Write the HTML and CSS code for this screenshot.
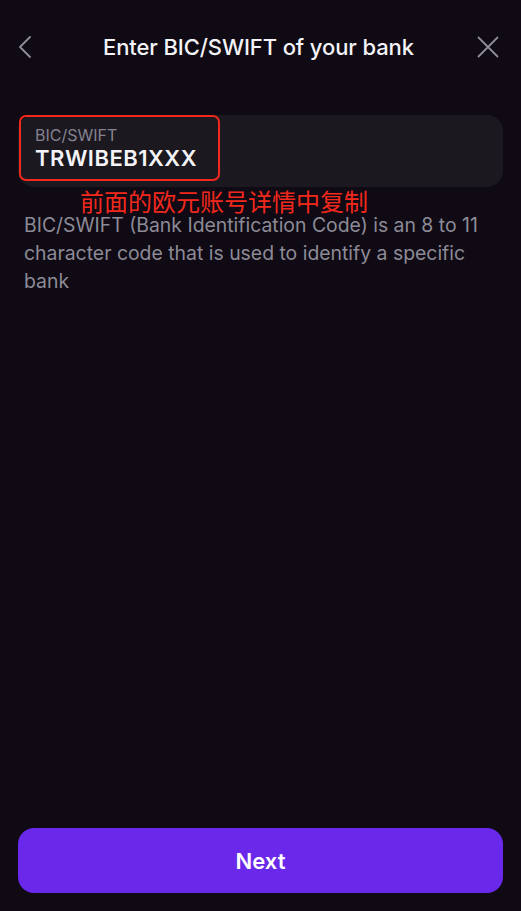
FILE: index.html
```html
<!DOCTYPE html>
<html lang="en">
<head>
<meta charset="utf-8">
<link rel="stylesheet" href="styles.css">
</head>
<body>
<div class="screen">
  <header class="topbar">
    <button class="icon-btn" aria-label="Back">
      <svg width="14" height="22" viewBox="0 0 14 22"><path d="M12 1 L2 11 L12 21" fill="none" stroke="#8f8c99" stroke-width="1.8" stroke-linecap="round" stroke-linejoin="round"/></svg>
    </button>
    <h1 class="title">Enter BIC/SWIFT of your bank</h1>
    <button class="icon-btn" aria-label="Close">
      <svg width="22" height="22" viewBox="0 0 22 22"><path d="M1.5 1.5 L20.5 20.5 M20.5 1.5 L1.5 20.5" fill="none" stroke="#8f8c99" stroke-width="1.8" stroke-linecap="round"/></svg>
    </button>
  </header>

  <main class="content">
    <div class="field-wrap">
      <div class="field">
        <div class="field-label">BIC/SWIFT</div>
        <div class="field-value">TRWIBEB1XXX</div>
      </div>
      <div class="highlight"></div>
      <div class="note">前面的欧元账号详情中复制</div>
    </div>
    <p class="desc">BIC/SWIFT (Bank Identification Code) is an 8 to 11 character code that is used to identify a specific bank</p>
  </main>

  <footer class="footer">
    <button class="primary">Next</button>
  </footer>
</div>
</body>
</html>
```

FILE: styles.css
```css
* { box-sizing: border-box; }
html, body {
  margin: 0;
  padding: 0;
  background: #0f0a14;
  height: 100%;
}
body {
  font-family: Inter, "Noto Sans", sans-serif;
  color: #f2f1f5;
}
.screen {
  height: 911px;
  display: flex;
  flex-direction: column;
}
.topbar {
  display: flex;
  align-items: center;
  justify-content: space-between;
  padding: 36px 22px 0 18px;
  height: 58px;
}
.icon-btn {
  background: none;
  border: 0;
  padding: 0;
  width: 22px;
  height: 22px;
  display: flex;
  align-items: center;
  justify-content: flex-start;
}
.title {
  margin: 0;
  font-size: 22px;
  font-weight: 500;
  color: #f4f3f7;
  letter-spacing: -0.1px;
}
.content {
  flex: 1;
  padding: 57px 18px 0;
}
.field-wrap {
  position: relative;
}
.field {
  background: #1b1820;
  border-radius: 16px;
  height: 72px;
  padding: 10px 17px 0;
}
.field-label {
  font-size: 16px;
  color: #858290;
  line-height: 20px;
}
.field-value {
  font-size: 22px;
  font-weight: 600;
  color: #f4f3f7;
  line-height: 26px;
  letter-spacing: 0.5px;
}
.highlight {
  position: absolute;
  left: 1px;
  top: 0;
  width: 201px;
  height: 66px;
  border: 2px solid #f2281c;
  border-radius: 7px;
}
.note {
  position: absolute;
  left: 62px;
  top: 76px;
  font-family: "Noto Sans CJK SC", sans-serif;
  font-size: 24px;
  line-height: 20px;
  color: #f2281c;
  white-space: nowrap;
}
.desc {
  margin: 24px 0 0 6px;
  font-size: 19.4px;
  line-height: 28px;
  color: #8d8a97;
  max-width: 470px;
}
.footer {
  padding: 0 18px 18px;
}
.primary {
  width: 100%;
  height: 65px;
  border: 0;
  border-radius: 16px;
  background: #6928ea;
  color: #ffffff;
  font-family: Inter, "Noto Sans", sans-serif;
  font-size: 22px;
  font-weight: 600;
}
```
